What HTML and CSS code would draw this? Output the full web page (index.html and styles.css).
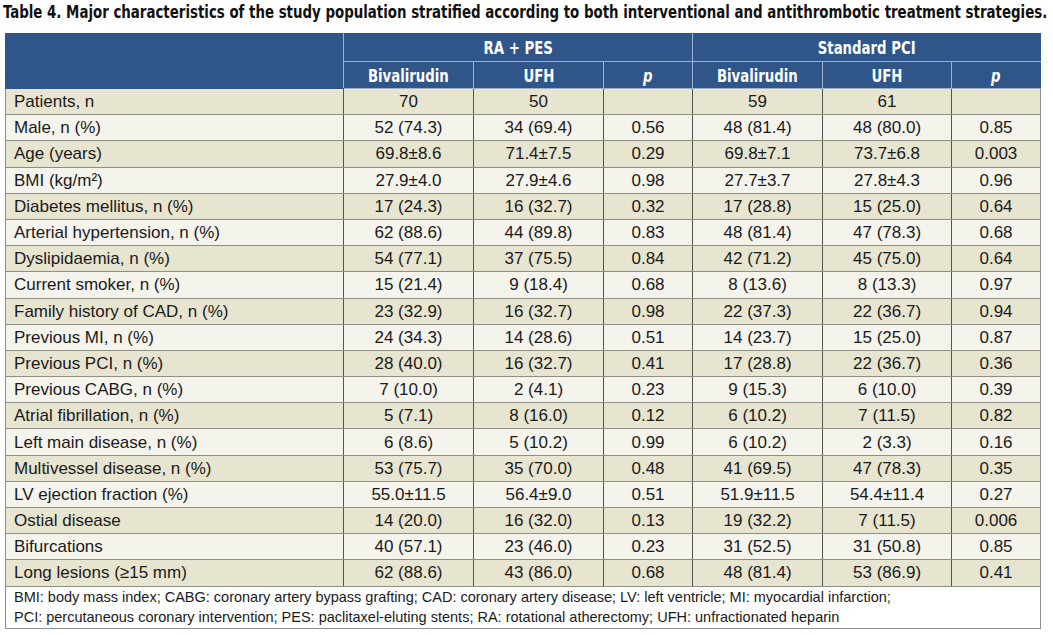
FILE: index.html
```html
<!DOCTYPE html>
<html>
<head>
<meta charset="utf-8">
<link rel="stylesheet" href="styles.css">
</head>
<body>
<div class="page">
  <h1 class="title"><span class="title-text">Table 4. Major characteristics of the study population stratified according to both interventional and antithrombotic treatment strategies.</span></h1>
  <table class="tbl">
    <colgroup>
      <col class="c-label"><col class="c-val"><col class="c-val"><col class="c-p"><col class="c-val"><col class="c-val2"><col class="c-p">
    </colgroup>
    <thead>
      <tr class="h1">
        <th rowspan="2" class="corner"></th>
        <th colspan="3" class="grp"><span class="cond">RA + PES</span></th>
        <th colspan="3" class="grp"><span class="cond">Standard PCI</span></th>
      </tr>
      <tr class="h2">
        <th><span class="cond">Bivalirudin</span></th><th><span class="cond">UFH</span></th><th class="pp"><span class="cond">p</span></th>
        <th><span class="cond">Bivalirudin</span></th><th><span class="cond">UFH</span></th><th class="pp"><span class="cond">p</span></th>
      </tr>
    </thead>
    <tbody>
      <tr><td>Patients, n</td><td>70</td><td>50</td><td></td><td>59</td><td>61</td><td></td></tr>
      <tr><td>Male, n (%)</td><td>52 (74.3)</td><td>34 (69.4)</td><td>0.56</td><td>48 (81.4)</td><td>48 (80.0)</td><td>0.85</td></tr>
      <tr><td>Age (years)</td><td>69.8±8.6</td><td>71.4±7.5</td><td>0.29</td><td>69.8±7.1</td><td>73.7±6.8</td><td>0.003</td></tr>
      <tr><td>BMI (kg/m²)</td><td>27.9±4.0</td><td>27.9±4.6</td><td>0.98</td><td>27.7±3.7</td><td>27.8±4.3</td><td>0.96</td></tr>
      <tr><td>Diabetes mellitus, n (%)</td><td>17 (24.3)</td><td>16 (32.7)</td><td>0.32</td><td>17 (28.8)</td><td>15 (25.0)</td><td>0.64</td></tr>
      <tr><td>Arterial hypertension, n (%)</td><td>62 (88.6)</td><td>44 (89.8)</td><td>0.83</td><td>48 (81.4)</td><td>47 (78.3)</td><td>0.68</td></tr>
      <tr><td>Dyslipidaemia, n (%)</td><td>54 (77.1)</td><td>37 (75.5)</td><td>0.84</td><td>42 (71.2)</td><td>45 (75.0)</td><td>0.64</td></tr>
      <tr><td>Current smoker, n (%)</td><td>15 (21.4)</td><td>9 (18.4)</td><td>0.68</td><td>8 (13.6)</td><td>8 (13.3)</td><td>0.97</td></tr>
      <tr><td>Family history of CAD, n (%)</td><td>23 (32.9)</td><td>16 (32.7)</td><td>0.98</td><td>22 (37.3)</td><td>22 (36.7)</td><td>0.94</td></tr>
      <tr><td>Previous MI, n (%)</td><td>24 (34.3)</td><td>14 (28.6)</td><td>0.51</td><td>14 (23.7)</td><td>15 (25.0)</td><td>0.87</td></tr>
      <tr><td>Previous PCI, n (%)</td><td>28 (40.0)</td><td>16 (32.7)</td><td>0.41</td><td>17 (28.8)</td><td>22 (36.7)</td><td>0.36</td></tr>
      <tr><td>Previous CABG, n (%)</td><td>7 (10.0)</td><td>2 (4.1)</td><td>0.23</td><td>9 (15.3)</td><td>6 (10.0)</td><td>0.39</td></tr>
      <tr><td>Atrial fibrillation, n (%)</td><td>5 (7.1)</td><td>8 (16.0)</td><td>0.12</td><td>6 (10.2)</td><td>7 (11.5)</td><td>0.82</td></tr>
      <tr><td>Left main disease, n (%)</td><td>6 (8.6)</td><td>5 (10.2)</td><td>0.99</td><td>6 (10.2)</td><td>2 (3.3)</td><td>0.16</td></tr>
      <tr><td>Multivessel disease, n (%)</td><td>53 (75.7)</td><td>35 (70.0)</td><td>0.48</td><td>41 (69.5)</td><td>47 (78.3)</td><td>0.35</td></tr>
      <tr><td>LV ejection fraction (%)</td><td>55.0±11.5</td><td>56.4±9.0</td><td>0.51</td><td>51.9±11.5</td><td>54.4±11.4</td><td>0.27</td></tr>
      <tr><td>Ostial disease</td><td>14 (20.0)</td><td>16 (32.0)</td><td>0.13</td><td>19 (32.2)</td><td>7 (11.5)</td><td>0.006</td></tr>
      <tr><td>Bifurcations</td><td>40 (57.1)</td><td>23 (46.0)</td><td>0.23</td><td>31 (52.5)</td><td>31 (50.8)</td><td>0.85</td></tr>
      <tr><td>Long lesions (≥15 mm)</td><td>62 (88.6)</td><td>43 (86.0)</td><td>0.68</td><td>48 (81.4)</td><td>53 (86.9)</td><td>0.41</td></tr>
    </tbody>
    <tfoot>
      <tr><td colspan="7" class="note">BMI: body mass index; CABG: coronary artery bypass grafting; CAD: coronary artery disease; LV: left ventricle; MI: myocardial infarction;<br>PCI: percutaneous coronary intervention; PES: paclitaxel-eluting stents; RA: rotational atherectomy; UFH: unfractionated heparin</td></tr>
    </tfoot>
  </table>
</div>
</body>
</html>
```

FILE: styles.css
```css
* { box-sizing: border-box; }
html, body { margin: 0; padding: 0; background: #ffffff; }
.page { padding: 2px 0 0 3px; width: 1053px; overflow: hidden; }
.title {
  margin: 0 0 11px 0;
  height: 20px;
  font-family: "DejaVu Sans", "Liberation Sans", sans-serif;
  font-stretch: condensed;
  font-weight: bold;
  font-size: 18px;
  line-height: 20px;
  color: #111111;
  white-space: nowrap;
}
.title-text {
  display: inline-block;
  transform: scaleX(0.825);
  transform-origin: 0 50%;
}
.tbl {
  margin-left: 2px;
  width: 1036px;
  border-collapse: collapse;
  table-layout: fixed;
  font-family: "Liberation Sans", Arial, sans-serif;
  font-size: 17px;
  color: #1a1a1a;
  border: 1px solid #8e8e8e;
}
.c-label { width: 338px; }
.c-val { width: 130px; }
.c-val2 { width: 129px; }
.c-p { width: 89px; }
thead th {
  background: #2f5589;
  color: #ffffff;
  font-family: "DejaVu Sans", "Liberation Sans", sans-serif;
  font-stretch: condensed;
  font-weight: bold;
  font-size: 18px;
  text-align: center;
  border: 1px solid #9fb2cb;
  padding: 0;
}
.cond {
  display: inline-block;
  transform: scaleX(0.82);
  transform-origin: 50% 50%;
}
thead .h1 th { height: 28px; }
thead .h2 th { height: 27px; }
thead .corner { border-right-color: #9fb2cb; border-top-color: #2f5589; border-left-color: #2f5589; border-bottom-color: #2f5589; }
thead .h1 th.grp { border-top-color: #2f5589; }
thead .h1 th.grp:last-child { border-right-color: #2f5589; }
thead .h2 th:last-child { border-right-color: #2f5589; }
.pp { font-style: italic; }
tbody td {
  height: 26.2px;
  padding: 0;
  text-align: center;
  border-left: 1px solid #55554b;
  border-top: 1px solid #8f8e84;
  border-bottom: 1px solid #8f8e84;
  line-height: 19px;
  white-space: nowrap;
}
tbody td:first-child { text-align: left; padding-left: 8px; border-left: 1px solid #8e8e8e; }
tbody tr:nth-child(odd) td { background: #e7e4cf; }
tbody tr:nth-child(even) td { background: #f4f3ec; }
.note {
  background: #ffffff;
  height: 42px;
  padding: 0 8px 1px 8px;
  line-height: 20px;
  font-size: 14.5px;
  border-top: 1px solid #8f8e84;
}
```
